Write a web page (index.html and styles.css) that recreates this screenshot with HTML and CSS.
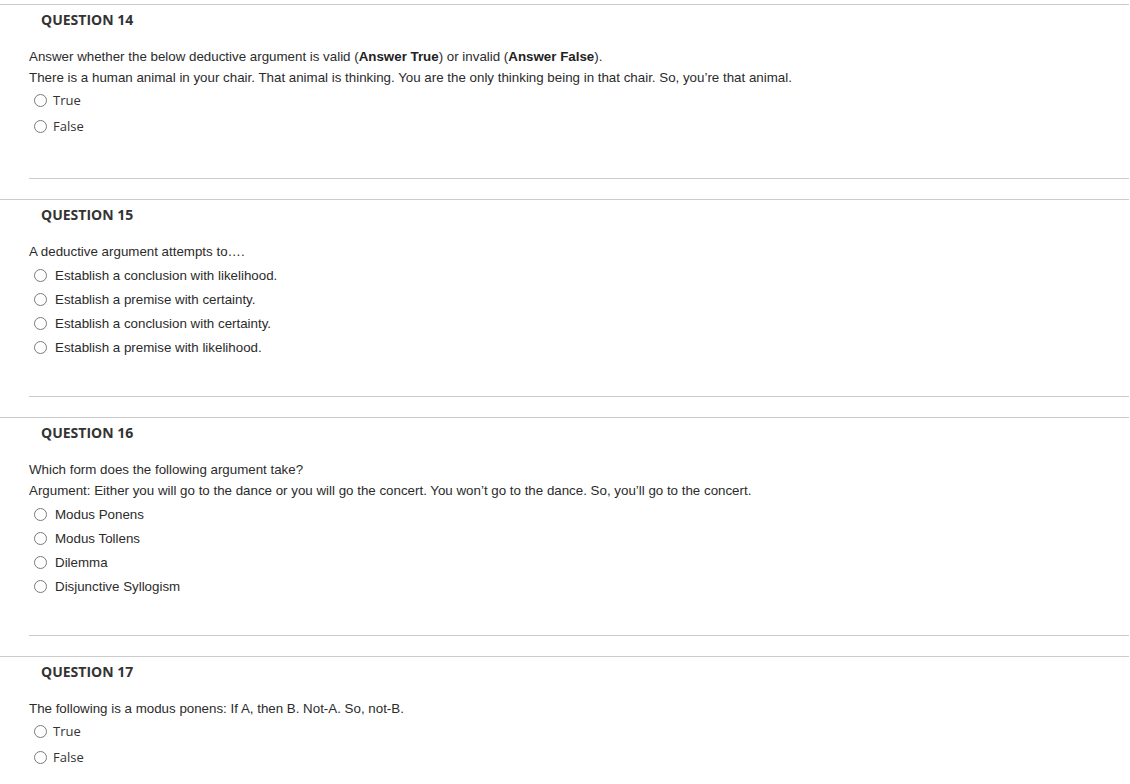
FILE: index.html
```html
<!DOCTYPE html>
<html>
<head>
<meta charset="utf-8">
<link rel="stylesheet" href="styles.css">
</head>
<body>
<div class="page">
  <section class="question">
    <div class="q-head">QUESTION 14</div>
    <div class="q-text">
      <p>Answer whether the below deductive argument is valid (<b>Answer True</b>) or invalid (<b>Answer False</b>).</p>
      <p>There is a human animal in your chair. That animal is thinking. You are the only thinking being in that chair. So, you’re that animal.</p>
    </div>
    <ul class="options options-tf">
      <li><span class="radio"></span><span class="label">True</span></li>
      <li><span class="radio"></span><span class="label">False</span></li>
    </ul>
    <div class="sep"></div>
  </section>

  <section class="question">
    <div class="q-head">QUESTION 15</div>
    <div class="q-text">
      <p>A deductive argument attempts to….</p>
    </div>
    <ul class="options">
      <li><span class="radio"></span><span class="label">Establish a conclusion with likelihood.</span></li>
      <li><span class="radio"></span><span class="label">Establish a premise with certainty.</span></li>
      <li><span class="radio"></span><span class="label">Establish a conclusion with certainty.</span></li>
      <li><span class="radio"></span><span class="label">Establish a premise with likelihood.</span></li>
    </ul>
    <div class="sep"></div>
  </section>

  <section class="question">
    <div class="q-head">QUESTION 16</div>
    <div class="q-text">
      <p>Which form does the following argument take?</p>
      <p>Argument: Either you will go to the dance or you will go the concert. You won’t go to the dance. So, you’ll go to the concert.</p>
    </div>
    <ul class="options">
      <li><span class="radio"></span><span class="label">Modus Ponens</span></li>
      <li><span class="radio"></span><span class="label">Modus Tollens</span></li>
      <li><span class="radio"></span><span class="label">Dilemma</span></li>
      <li><span class="radio"></span><span class="label">Disjunctive Syllogism</span></li>
    </ul>
    <div class="sep"></div>
  </section>

  <section class="question">
    <div class="q-head">QUESTION 17</div>
    <div class="q-text">
      <p>The following is a modus ponens: If A, then B. Not-A. So, not-B.</p>
    </div>
    <ul class="options options-tf">
      <li><span class="radio"></span><span class="label">True</span></li>
      <li><span class="radio"></span><span class="label">False</span></li>
    </ul>
  </section>
</div>
</body>
</html>
```

FILE: styles.css
```css
html, body {
  margin: 0;
  padding: 0;
  background: #ffffff;
}

body {
  font-family: "Liberation Sans", Arial, sans-serif;
  font-size: 13.33px;
  color: #2b2b2b;
  overflow: hidden;
}

.page {
  padding-top: 4px;
  width: 1129px;
}

.question {
  border-top: 1px solid #cccccc;
  padding-bottom: 20px;
}

.q-head {
  font-family: "Open Sans", sans-serif;
  font-weight: 700;
  font-size: 14px;
  line-height: 18px;
  color: #333333;
  padding: 6px 0 0 41px;
}

.q-text {
  margin-top: 17px;
  padding-left: 29px;
}

.q-text p {
  margin: 0;
  line-height: 21px;
}

.q-text b {
  font-weight: 700;
  color: #222222;
}

.options {
  list-style: none;
  margin: 1px 0 37px 0;
  padding: 0 0 0 34px;
}

.options li {
  display: flex;
  align-items: center;
  height: 24px;
}

.options .radio {
  flex: none;
  width: 11px;
  height: 11px;
  border: 1px solid #7a7a7a;
  border-radius: 50%;
  background: #ffffff;
  margin-right: 8px;
}

.options-tf {
  margin: -1px 0 39px 0;
}

.options-tf li {
  height: 26px;
}

.options-tf .label {
  font-family: "Open Sans", sans-serif;
  font-size: 13px;
  color: #333333;
  margin-left: -2px;
}

.sep {
  margin-left: 29px;
  border-top: 1px solid #cccccc;
}
```
